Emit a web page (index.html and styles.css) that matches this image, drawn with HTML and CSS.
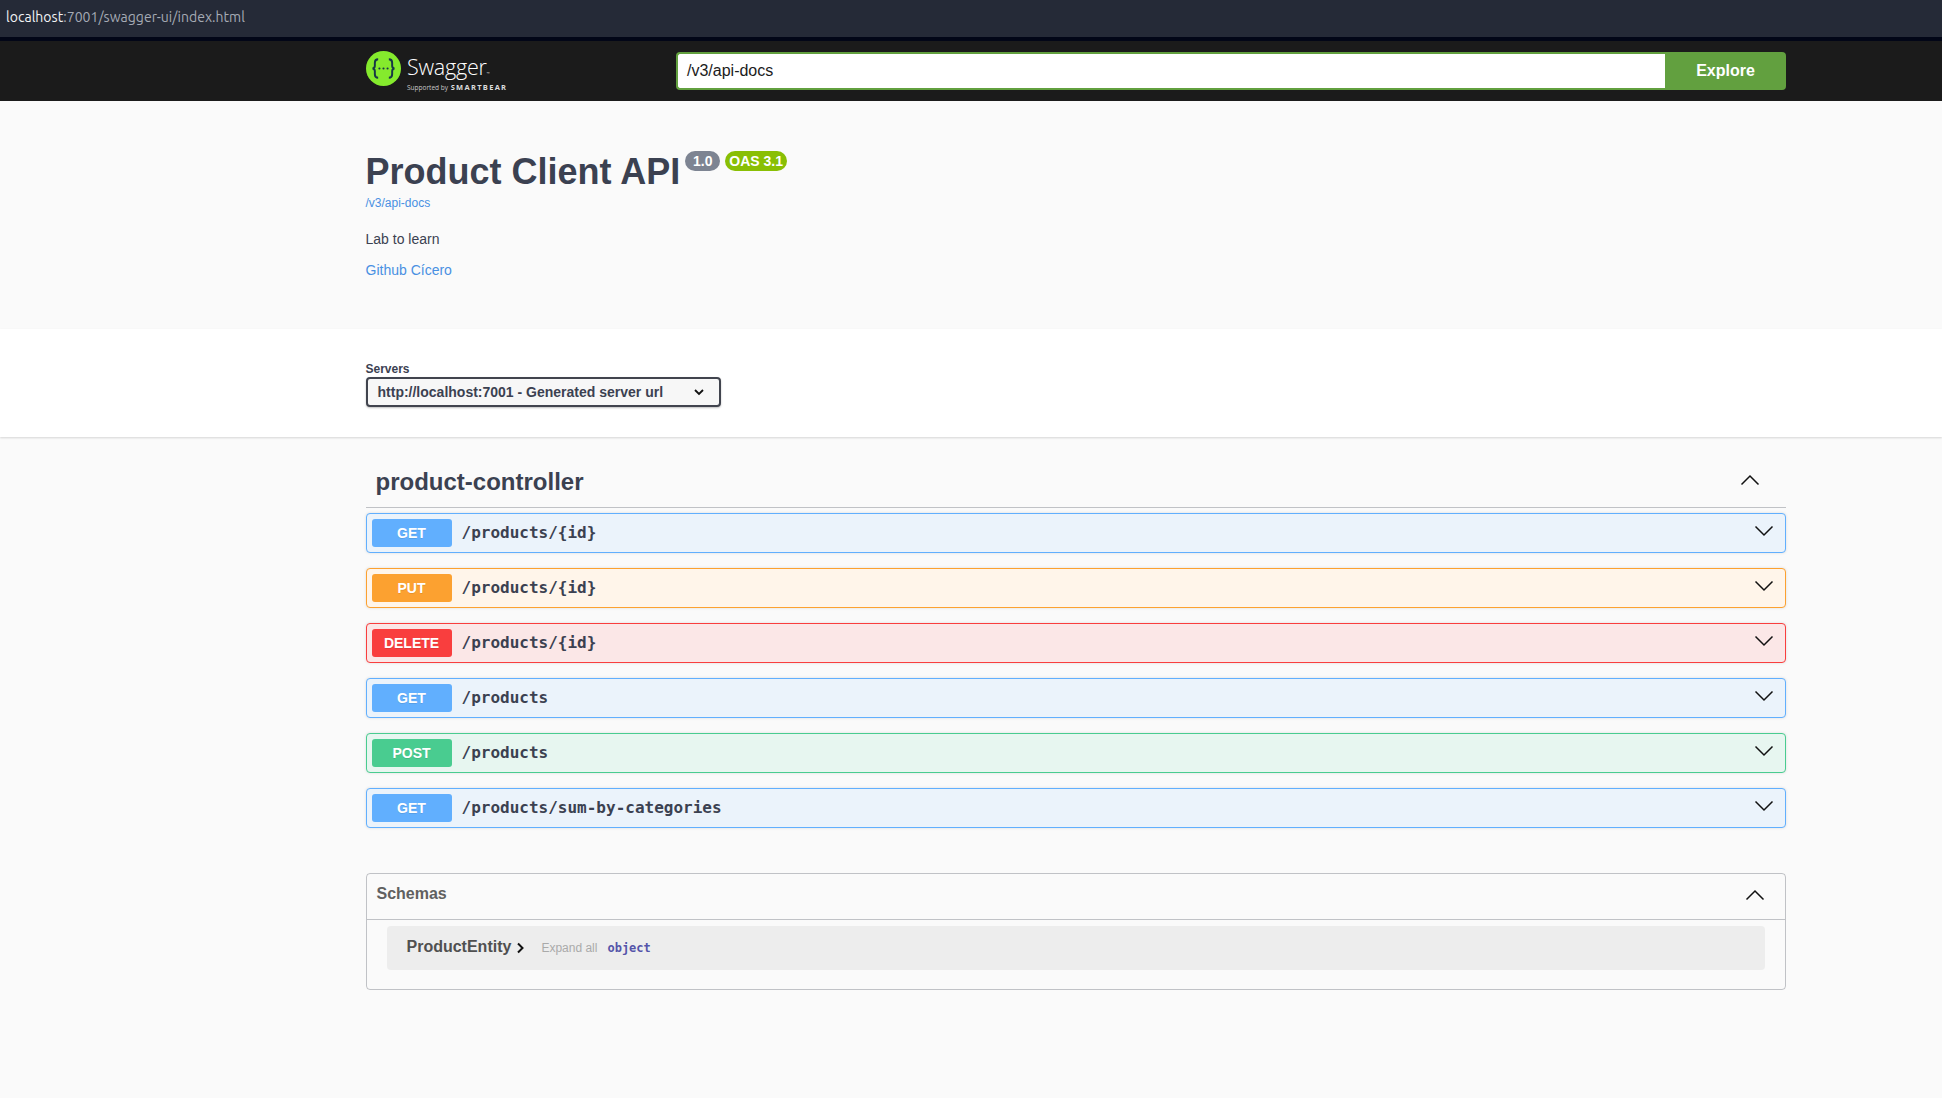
FILE: index.html
```html
<!DOCTYPE html>
<html lang="en">
<head>
<meta charset="utf-8">
<title>Swagger UI</title>
<link rel="stylesheet" href="styles.css">
</head>
<body>
<div class="addressbar"><span class="host">localhost</span><span class="rest">:7001/swagger-ui/index.html</span></div>
<header class="topbar">
  <div class="wrap topbar-in">
    <a class="logo">
      <svg class="logo-mark" width="35" height="35" viewBox="0 0 36 36" aria-hidden="true">
        <circle cx="18" cy="18" r="18" fill="#85ea2d"/>
        <path d="M12.5 8.5c-3 0-3.400 1.500-3.400 3.600v3.100c0 1.600-.8 2.500-2.300 2.800 1.500.3 2.300 1.200 2.300 2.800v3.100c0 2.100.4 3.600 3.400 3.600M23.500 8.500c3 0 3.400 1.500 3.400 3.600v3.100c0 1.600.8 2.500 2.300 2.800-1.500.3-2.300 1.200-2.300 2.800v3.100c0 2.100-.4 3.600-3.400 3.600" fill="none" stroke="#173647" stroke-width="2"/>
        <circle cx="13.800" cy="18" r="1.100" fill="#173647"/><circle cx="18" cy="18" r="1.100" fill="#173647"/><circle cx="22.200" cy="18" r="1.100" fill="#173647"/>
      </svg>
      <span class="logo-text">
        <span class="logo-name">Swagger<small>™</small></span>
        <span class="logo-sub">Supported by <b>SMARTBEAR</b></span>
      </span>
    </a>
    <form class="explore">
      <div class="url-input">/v3/api-docs</div>
      <div class="explore-btn">Explore</div>
    </form>
  </div>
</header>
<section class="info">
  <div class="wrap">
    <div class="title-row">
      <h1 class="title">Product Client API</h1>
      <span class="badge badge-ver">1.0</span>
      <span class="badge badge-oas">OAS 3.1</span>
    </div>
    <a class="spec-link">/v3/api-docs</a>
    <p class="desc">Lab to learn</p>
    <p class="gh"><a class="gh-link">Github Cícero</a></p>
  </div>
</section>
<section class="schemes">
  <div class="wrap">
    <div class="servers-label">Servers</div>
    <div class="select">
      <span>http://localhost:7001 - Generated server url</span>
      <svg width="12" height="12" viewBox="0 0 12 12" aria-hidden="true"><path d="M2 4l4 4 4-4" fill="none" stroke="#111" stroke-width="1.800"/></svg>
    </div>
  </div>
</section>
<main class="wrap main">
  <div class="tag">
    <h3>product-controller</h3>
    <svg class="tag-chev" width="20" height="20" viewBox="0 0 20 20" aria-hidden="true"><path d="M1.500 14.500L10 6l8.500 8.500" fill="none" stroke="#111" stroke-width="1.500"/></svg>
  </div>
  <div class="ops">
    <div class="op op-get"><span class="method">GET</span><span class="path">/products/{id}</span><svg class="op-chev" width="20" height="20" viewBox="0 0 20 20" aria-hidden="true"><path d="M1.500 5.500L10 14l8.500-8.500" fill="none" stroke="#111" stroke-width="1.500"/></svg></div>
    <div class="op op-put"><span class="method">PUT</span><span class="path">/products/{id}</span><svg class="op-chev" width="20" height="20" viewBox="0 0 20 20" aria-hidden="true"><path d="M1.500 5.500L10 14l8.500-8.500" fill="none" stroke="#111" stroke-width="1.500"/></svg></div>
    <div class="op op-delete"><span class="method">DELETE</span><span class="path">/products/{id}</span><svg class="op-chev" width="20" height="20" viewBox="0 0 20 20" aria-hidden="true"><path d="M1.500 5.500L10 14l8.500-8.500" fill="none" stroke="#111" stroke-width="1.500"/></svg></div>
    <div class="op op-get"><span class="method">GET</span><span class="path">/products</span><svg class="op-chev" width="20" height="20" viewBox="0 0 20 20" aria-hidden="true"><path d="M1.500 5.500L10 14l8.500-8.500" fill="none" stroke="#111" stroke-width="1.500"/></svg></div>
    <div class="op op-post"><span class="method">POST</span><span class="path">/products</span><svg class="op-chev" width="20" height="20" viewBox="0 0 20 20" aria-hidden="true"><path d="M1.500 5.500L10 14l8.500-8.500" fill="none" stroke="#111" stroke-width="1.500"/></svg></div>
    <div class="op op-get"><span class="method">GET</span><span class="path">/products/sum-by-categories</span><svg class="op-chev" width="20" height="20" viewBox="0 0 20 20" aria-hidden="true"><path d="M1.500 5.500L10 14l8.500-8.500" fill="none" stroke="#111" stroke-width="1.500"/></svg></div>
  </div>
  <section class="models">
    <div class="models-head">
      <h4>Schemas</h4>
      <svg class="models-chev" width="20" height="20" viewBox="0 0 20 20" aria-hidden="true"><path d="M1.500 14.500L10 6l8.500 8.500" fill="none" stroke="#111" stroke-width="1.500"/></svg>
    </div>
    <div class="models-body">
      <div class="model">
        <span class="model-name">ProductEntity</span>
        <svg class="model-chev" width="12" height="12" viewBox="0 0 12 12" aria-hidden="true"><path d="M3 1.500L7.500 6 3 10.500" fill="none" stroke="#111" stroke-width="2"/></svg>
        <span class="expand">Expand all</span>
        <span class="type">object</span>
      </div>
    </div>
  </section>
</main>
</body>
</html>
```
FILE: styles.css
```css
* { box-sizing: border-box; }
html, body { margin: 0; padding: 0; }
body {
  height: 1098px;
  overflow: hidden;
  background: #fafafa;
  font-family: "Liberation Sans", Arial, sans-serif;
  color: #3b4151;
}
h1, h3, h4, p { margin: 0; }

.wrap { width: 1420.5px; margin-left: 365.5px; }

.addressbar {
  height: 41px;
  padding: 8px 0 0 6px;
  background: #252a37;
  border-bottom: 4px solid #020617;
  font: 14px/18px Ubuntu, "Open Sans", "Noto Sans", sans-serif;
  letter-spacing: .03px;
}
.host { color: #f2f3f5; }
.rest { color: #a6abb5; }

.topbar { height: 60px; background: #1b1b1b; }
.topbar-in { display: flex; align-items: center; height: 60px; }
.logo { display: flex; align-items: center; gap: 6px; width: 310.5px; flex: none; padding-left: .5px; margin-top: -6px; }
.logo-mark { flex: none; }
.logo-text { display: flex; flex-direction: column; color: #fff; margin-top: 9px; }
.logo-name { margin-top: 4px; font: 300 21.5px/18px "Open Sans", sans-serif; letter-spacing: -.2px; }
.logo-name small { font-size: 4px; vertical-align: baseline; }
.logo-sub { font: 400 6.500px/9px "Open Sans", sans-serif; color: #c9c9c9; white-space: nowrap; }
.logo-sub b { font-size: 7.500px; font-weight: 700; letter-spacing: 1.300px; color: #ddd; margin-left: 1px; }

.explore { display: flex; flex: 1; height: 38px; margin-top: -1px; }
.url-input {
  flex: 1;
  border: 2px solid #62a03f;
  border-right: 0;
  border-radius: 4px 0 0 4px;
  background: #fff;
  color: #1b1b1b;
  font-size: 16px;
  line-height: 34px;
  padding-left: 9px;
}
.explore-btn {
  flex: none;
  width: 121px;
  background: #62a03f;
  border-radius: 0 4px 4px 0;
  color: #fff;
  font-size: 16px;
  font-weight: 700;
  line-height: 38px;
  text-align: center;
}

.info { height: 228px; padding-top: 50px; background: #fafafa; }
.title-row { display: flex; align-items: flex-start; height: 39px; }
.title { font-size: 36px; line-height: 42px; font-weight: 700; color: #3b4151; }
.badge {
  height: 20px;
  border-radius: 10px;
  color: #fff;
  font-size: 14px;
  font-weight: 700;
  line-height: 20px;
  text-align: center;
}
.badge-ver { width: 35px; margin-left: 5px; background: #7d8492; }
.badge-oas { width: 62px; margin-left: 5px; background: #89bf04; }
.spec-link { display: block; margin-top: 6px; font-size: 12px; line-height: 14px; color: #4990e2; }
.desc { margin-top: 21px; font-size: 14px; line-height: 16px; color: #3b4151; }
.gh { margin-top: 15px; font-size: 14px; line-height: 16px; }
.gh-link { color: #4990e2; }

.schemes {
  height: 108px;
  padding-top: 33px;
  background: #fff;
  box-shadow: 0 1px 2px 0 rgba(0, 0, 0, .15);
}
.servers-label { font-size: 12px; font-weight: 700; line-height: 14px; color: #3b4151; }
.select {
  display: flex;
  align-items: center;
  justify-content: space-between;
  width: 355px;
  height: 30px;
  margin-top: 1px;
  padding: 0 14px 0 10px;
  border: 2px solid #41444e;
  border-radius: 4px;
  background: #f7f7f7;
  box-shadow: 0 1px 2px 0 rgba(0, 0, 0, .25);
  color: #3b4151;
  font-size: 14px;
  font-weight: 700;
}

.main { padding-top: 20px; }
.tag {
  display: flex;
  align-items: center;
  justify-content: space-between;
  height: 51px;
  padding: 0 26px 0 10px;
  border-bottom: 1px solid rgba(59, 65, 81, .3);
}
.tag h3 { font-size: 24px; line-height: 30px; font-weight: 700; color: #3b4151; }
.tag-chev { margin-top: -4px; }

.ops { display: flex; flex-direction: column; gap: 15px; margin-top: 5px; }
.op {
  display: flex;
  align-items: center;
  height: 40px;
  padding: 0 11px 0 5px;
  border: 1px solid;
  border-radius: 4px;
  box-shadow: 0 0 3px rgba(0, 0, 0, .12);
}
.op-get { background: #ebf3fb; border-color: #61affe; }
.op-put { background: #fff5ea; border-color: #fca130; }
.op-delete { background: #fbe7e7; border-color: #f93e3e; }
.op-post { background: #e7f6f0; border-color: #49cc90; }
.method {
  flex: none;
  width: 80px;
  height: 28px;
  border-radius: 3px;
  color: #fff;
  font-size: 14px;
  font-weight: 700;
  line-height: 28px;
  text-align: center;
  text-shadow: 0 1px 0 rgba(0, 0, 0, .1);
}
.op-get .method { background: #61affe; }
.op-put .method { background: #fca130; }
.op-delete .method { background: #f93e3e; }
.op-post .method { background: #49cc90; }
.path {
  flex: 1;
  padding-left: 10px;
  font: 700 16px/20px "DejaVu Sans Mono", "Liberation Mono", monospace;
  color: #3b4151;
}
.op-chev { flex: none; margin-top: -4px; }

.models {
  margin-top: 45px;
  height: 117px;
  border: 1px solid rgba(59, 65, 81, .3);
  border-radius: 4px;
}
.models-head {
  display: flex;
  align-items: center;
  justify-content: space-between;
  height: 46px;
  padding: 0 20px 0 10px;
  border-bottom: 1px solid rgba(59, 65, 81, .3);
}
.models-head h4 { font-size: 16px; line-height: 20px; font-weight: 700; color: #606060; margin-top: -5px; }
.models-chev { margin-top: -4px; }
.models-body { padding: 6px 20px 0; }
.model {
  display: flex;
  align-items: center;
  height: 44px;
  padding: 0 0 0 20px;
  border-radius: 4px;
  background: #ededed;
}
.model-name { font-size: 16px; line-height: 20px; font-weight: 700; color: #505050; margin-top: -3px; }
.model-chev { margin-left: 4px; }
.expand { margin-left: 14px; font-size: 12px; color: #aaa; }
.type { margin-left: 10px; font: 700 12px/16px "DejaVu Sans Mono", monospace; color: #55a; }
```
